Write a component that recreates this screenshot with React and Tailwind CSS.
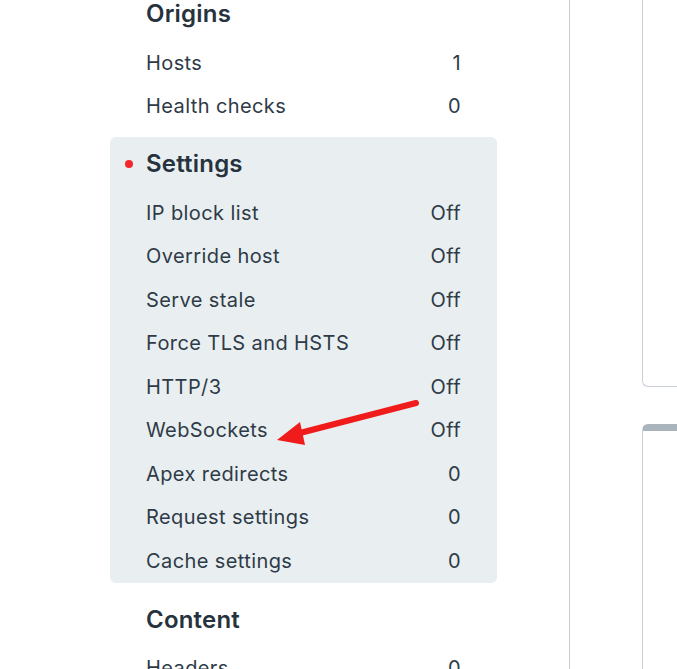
const ORIGINS = [
  { label: 'Hosts', value: '1' },
  { label: 'Health checks', value: '0' },
]

const SETTINGS = [
  { label: 'IP block list', value: 'Off' },
  { label: 'Override host', value: 'Off' },
  { label: 'Serve stale', value: 'Off' },
  { label: 'Force TLS and HSTS', value: 'Off' },
  { label: 'HTTP/3', value: 'Off' },
  { label: 'WebSockets', value: 'Off' },
  { label: 'Apex redirects', value: '0' },
  { label: 'Request settings', value: '0' },
  { label: 'Cache settings', value: '0' },
]

const CONTENT = [{ label: 'Headers', value: '0' }]

function Row({ label, value }) {
  return (
    <div className="h-[43.5px] flex items-center justify-between text-[20px] tracking-[0.4px] text-[#2e3b47]">
      <span>{label}</span>
      <span>{value}</span>
    </div>
  )
}

function Section({ title, items, active }) {
  return (
    <div className={active ? 'bg-[#e9eef1] rounded-md px-[36px] pt-[13px]' : 'px-[36px]'}>
      <div className="relative h-[28px] flex items-center mb-[13px]">
        {active && <span className="absolute left-[-21px] w-[8px] h-[8px] rounded-full bg-[#f4262c]" />}
        <h2 className="text-[24px] font-semibold tracking-[0.2px] text-[#26323d] leading-none">{title}</h2>
      </div>
      {items.map((it) => <Row key={it.label} {...it} />)}
    </div>
  )
}

export default function App() {
  return (
    <div className="relative h-[669px] overflow-hidden bg-white flex" style={{ fontFamily: 'Inter, "Noto Sans", sans-serif' }}>
      <div className="w-[497px] pl-[110px] shrink-0">
        <Section title="Origins" items={ORIGINS} />
        <div className="mt-[9px]">
          <Section title="Settings" items={SETTINGS} active />
        </div>
        <div className="mt-[23px]">
          <Section title="Content" items={CONTENT} />
        </div>
      </div>
      <div className="w-[72px] shrink-0" />
      <div className="flex-1 border-l border-[#c5ced5] pl-[72px]">
        <div className="h-[387px] border border-t-0 border-r-0 border-[#c9d1d8] rounded-bl-md" />
        <div className="mt-[37px] h-[300px] border-l border-[#c9d1d8] border-t-[7px] border-t-[#a9b4bd] rounded-tl-md" />
      </div>
      <svg className="absolute left-0 top-0 pointer-events-none" width="677" height="669">
        <line x1="416" y1="403" x2="296" y2="434" stroke="#f01b1b" strokeWidth="6" strokeLinecap="round" />
        <polygon points="277,440 300,422 305,445" fill="#f01b1b" />
      </svg>
    </div>
  )
}
